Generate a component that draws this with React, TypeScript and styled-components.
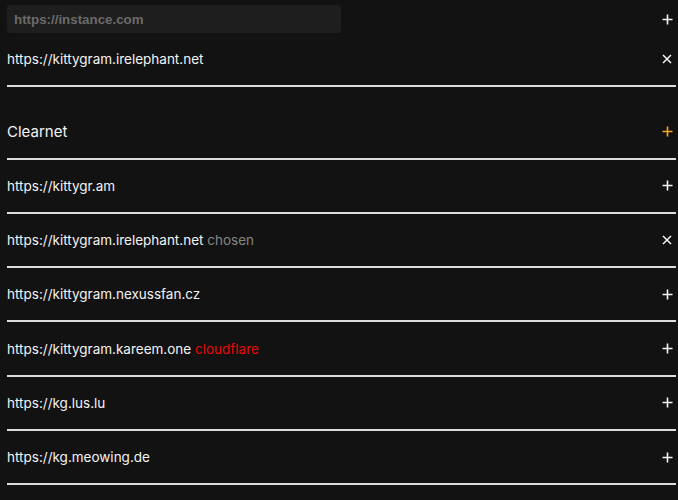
import React from "react";
import styled, { createGlobalStyle } from "styled-components";

const Global = createGlobalStyle`
  html, body { margin: 0; padding: 0; background: #121212; }
  body { font-family: Inter, "Noto Sans", sans-serif; color: #f2f2f2; }
`;

const Page = styled.div`
  padding: 5px 2px 0 7px;
  display: flex;
  flex-direction: column;
`;

const InputRow = styled.div`
  display: flex;
  align-items: center;
  justify-content: space-between;
  height: 28px;
`;

const UrlInput = styled.input`
  width: 334px;
  height: 28px;
  box-sizing: border-box;
  background: #1e1e1e;
  border: none;
  border-radius: 3px;
  padding: 0 7px;
  font-family: "Liberation Sans", Arial, sans-serif;
  font-weight: 700;
  font-size: 13.333px;
  color: #eee;
  outline: none;
  &::placeholder { color: #6a6a6a; }
`;

const Row = styled.div<{ $header?: boolean }>`
  display: flex;
  align-items: center;
  justify-content: space-between;
  height: 52.3px;
  border-bottom: 2px solid #dcdcdc;
  margin-top: ${(p) => (p.$header ? "18px" : "0")};
  font-size: ${(p) => (p.$header ? "15px" : "13.5px")};
`;

const Label = styled.span`
  white-space: nowrap;
`;

const Tag = styled.span<{ $tone: "muted" | "danger" }>`
  color: ${(p) => (p.$tone === "muted" ? "#858585" : "#e8090b")};
`;

const IconButton = styled.button<{ $color?: string }>`
  width: 18px;
  height: 18px;
  padding: 0;
  border: none;
  background: transparent;
  display: flex;
  align-items: center;
  justify-content: center;
  color: ${(p) => p.$color || "#f5f5f5"};
  cursor: pointer;
`;

const Plus = ({ color }: { color?: string }) => (
  <IconButton $color={color}>
    <svg width="11" height="11" viewBox="0 0 11 11">
      <path d="M5.5 0.5v10M0.5 5.5h10" stroke="currentColor" strokeWidth="1.6" />
    </svg>
  </IconButton>
);

const Cross = () => (
  <IconButton>
    <svg width="10" height="10" viewBox="0 0 10 10">
      <path d="M1 1l8 8M9 1l-8 8" stroke="currentColor" strokeWidth="1.5" />
    </svg>
  </IconButton>
);

type Item = { url: string; tag?: string; tone?: "muted" | "danger"; chosen?: boolean };

const items: Item[] = [
  { url: "https://kittygr.am" },
  { url: "https://kittygram.irelephant.net", tag: "chosen", tone: "muted", chosen: true },
  { url: "https://kittygram.nexussfan.cz" },
  { url: "https://kittygram.kareem.one", tag: "cloudflare", tone: "danger" },
  { url: "https://kg.lus.lu" },
  { url: "https://kg.meowing.de" },
];

export default function App() {
  return (
    <>
      <Global />
      <Page>
        <InputRow>
          <UrlInput placeholder="https://instance.com" />
          <Plus />
        </InputRow>
        <Row>
          <Label>https://kittygram.irelephant.net</Label>
          <Cross />
        </Row>
        <Row $header>
          <Label>Clearnet</Label>
          <Plus color="#f5a524" />
        </Row>
        {items.map((it) => (
          <Row key={it.url}>
            <Label>
              {it.url}
              {it.tag && <Tag $tone={it.tone!}> {it.tag}</Tag>}
            </Label>
            {it.chosen ? <Cross /> : <Plus />}
          </Row>
        ))}
      </Page>
    </>
  );
}
